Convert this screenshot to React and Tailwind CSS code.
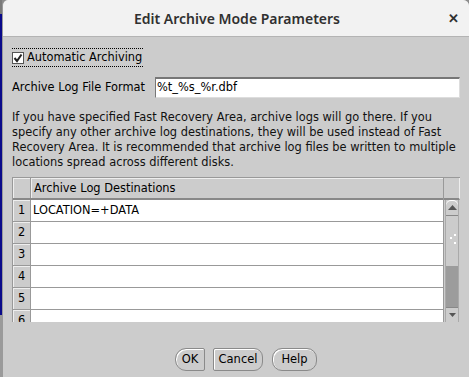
import React from 'react';

const rows = ['LOCATION=+DATA', '', '', '', '', ''];

const Btn = ({ children, className }) => (
  <button
    className={`h-[23px] border border-[#8a8a8a] bg-[#cccccc] shadow-[inset_1px_1px_0_#ffffff] text-[11.5px] text-black ${className}`}
  >
    {children}
  </button>
);

export default function App() {
  return (
    <div className="w-[469px] h-[377px] flex bg-[#8c8c8c] overflow-hidden">
      {/* desktop strip on the left */}
      <div className="w-[2px] flex flex-col">
        <div className="h-[14px] bg-[#7a7a7a]" />
        <div className="h-[301px] bg-[#0a0a8a]" />
        <div className="flex-1 bg-[#9a9a9a]" />
      </div>

      <div className="flex-1 flex flex-col bg-[#cccccc] rounded-tl-[6px] rounded-tr-[6px] overflow-hidden border-l border-[#9a9a9a]">
        {/* title bar */}
        <div className="h-[37px] flex items-center relative bg-[#f2f2f2] border-b border-[#b4b4b4] font-['Noto_Sans',sans-serif]">
          <div className="flex-1 text-center text-[14px] font-semibold text-[#303030] pl-[2px]">
            Edit Archive Mode Parameters
          </div>
          <span className="absolute right-[10px] top-[9px] text-[13px] font-bold text-[#303030]">✕</span>
        </div>

        <div className="flex-1 flex flex-col px-[9px] font-['DejaVu_Sans',sans-serif] text-[11.4px] text-black">
          {/* checkbox */}
          <div className="mt-[11px] h-[19px] self-start pr-[1px] border-y border-dotted border-black flex items-center whitespace-nowrap">
            <span className="w-[12px] h-[12px] border border-[#555] bg-white flex items-center justify-center">
              <svg width="10" height="10" viewBox="0 0 10 10">
                <path d="M1.5 5 L4 8 L8.5 1.5" fill="none" stroke="#222" strokeWidth="2" />
              </svg>
            </span>
            <span className="ml-[3px]">Automatic Archiving</span>
          </div>

          {/* file format */}
          <div className="mt-[10px] flex items-center">
            <span className="w-[143px] whitespace-nowrap">Archive Log File Format</span>
            <div className="flex-1 h-[21px] bg-white border-t-2 border-l border-[#777] border-r border-b border-r-[#ddd] border-b-[#ddd] flex items-center pl-[1px]">
              %t_%s_%r.dbf
            </div>
          </div>

          {/* description */}
          <p className="mt-[12px] leading-[15px] text-[#111]">
            If you have specified Fast Recovery Area, archive logs will go there. If you specify any other archive log destinations, they will be used instead of Fast Recovery Area. It is recommended that archive log files be written to multiple locations spread across different disks.
          </p>

          {/* table */}
          <div className="mt-[7px] h-[145px] flex border-t border-l border-[#999] overflow-hidden">
            <div className="flex-1 flex flex-col">
              <div className="h-[22px] flex shrink-0 border-b-2 border-[#888]">
                <div className="w-[18px] border-r border-[#999] shadow-[inset_1px_1px_0_#eee]" />
                <div className="flex-1 flex items-center pl-[3px] pt-[1px] shadow-[inset_1px_1px_0_#eee]">
                  Archive Log Destinations
                </div>
              </div>
              {rows.map((v, i) => (
                <div key={i} className="h-[22px] flex shrink-0">
                  <div className="w-[18px] bg-[#cccccc] border-r border-b border-[#999] flex items-center pl-[5px] shadow-[inset_1px_1px_0_#eee]">
                    {i + 1}
                  </div>
                  <div className="flex-1 bg-white border-b border-[#999] flex items-center pl-[2px]">
                    {v}
                  </div>
                </div>
              ))}
            </div>

            {/* scrollbar */}
            <div className="w-[17px] flex flex-col border-l border-[#999] bg-[#cccccc]">
              <div className="h-[22px] shrink-0 border-b-2 border-[#888] border-r border-r-[#eee]" />
              <div className="flex-1 flex flex-col border-x border-[#aaa] mx-[1px]">
                <div className="h-[16px] shrink-0 flex items-center justify-center border-b border-[#888] rounded-t-[5px] shadow-[inset_0_1px_0_#fff]">
                  <svg width="9" height="5" viewBox="0 0 9 5"><path d="M0 5 L4.5 0 L9 5 Z" fill="#555" /></svg>
                </div>
                <div className="h-[50px] shrink-0 bg-[#cccccc] relative">
                  <span className="absolute left-[4px] top-[21px] w-[2px] h-[2px] bg-white" />
                  <span className="absolute left-[8px] top-[18px] w-[2px] h-[2px] bg-white" />
                  <span className="absolute left-[8px] top-[26px] w-[2px] h-[2px] bg-white" />
                </div>
                <div className="flex-1 bg-[#9c9c9c]" />
                <div className="h-[15px] shrink-0 flex items-center justify-center border-t border-[#888] rounded-b-[5px] bg-[#cccccc]">
                  <svg width="7" height="4" viewBox="0 0 7 4"><path d="M0 0 L3.5 4 L7 0 Z" fill="#555" /></svg>
                </div>
              </div>
            </div>
          </div>

          {/* buttons */}
          <div className="mt-[26px] flex justify-center gap-[8px] pl-[20px]">
            <Btn className="w-[30px] rounded-l-[11px] rounded-r-[2px]">OK</Btn>
            <Btn className="w-[50px] rounded-l-[2px] rounded-r-[9px]">Cancel</Btn>
            <Btn className="w-[45px] rounded-[10px] ml-[1px]">Help</Btn>
          </div>
        </div>
      </div>
    </div>
  );
}
